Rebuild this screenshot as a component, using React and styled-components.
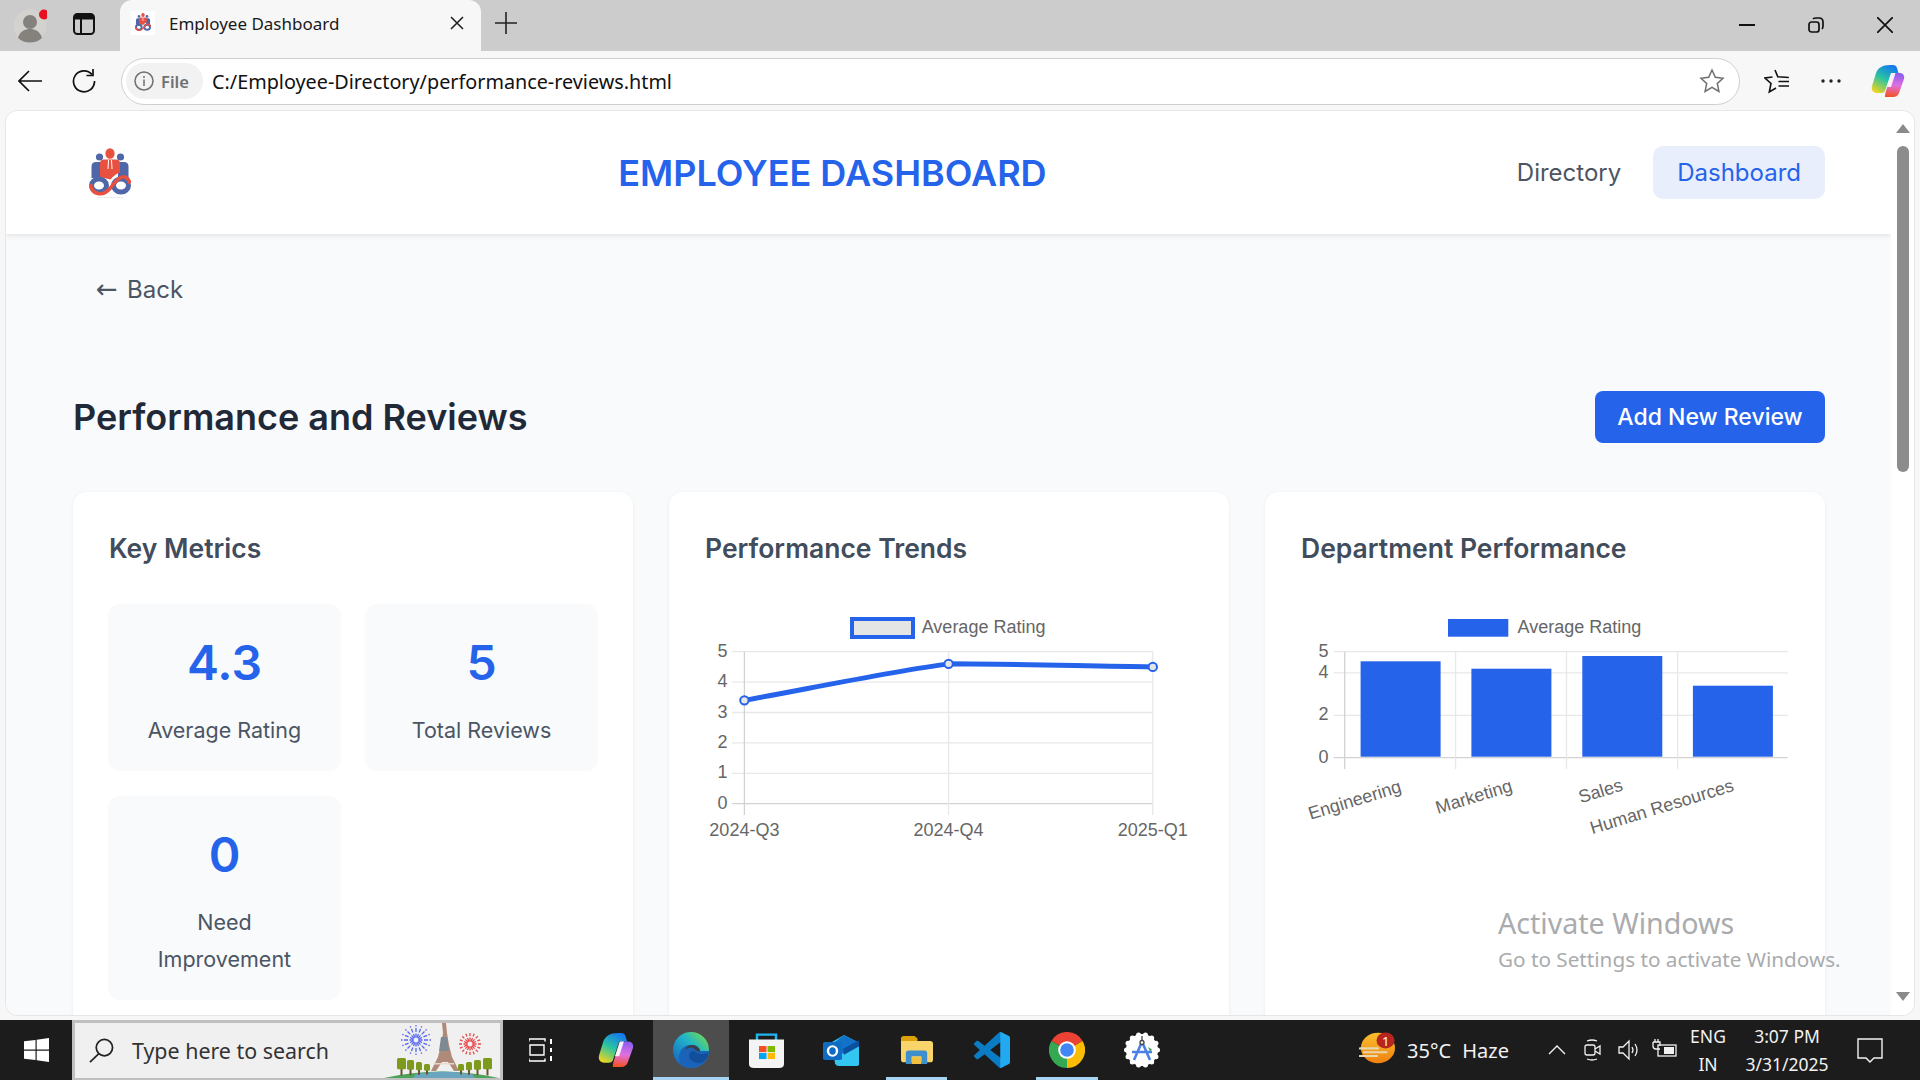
import React from 'react';
import styled, { createGlobalStyle } from 'styled-components';

const GlobalStyle = createGlobalStyle`
    html, body {
        margin: 0;
        padding: 0;
        width: 1920px;
        height: 1080px;
        overflow: hidden;
        background: #f7f7f7;
    }
    * { box-sizing: border-box; }
`;

const BLUE = '#2563eb';
const UI_FONT = `'Noto Sans', 'Open Sans', sans-serif`;
const PAGE_FONT = `Inter, 'Liberation Sans', sans-serif`;

/* ---------- browser frame ---------- */

const Screen = styled.div`
    position: relative;
    display: flex;
    flex-direction: column;
    width: 1920px;
    height: 1080px;
    overflow: hidden;
    font-family: ${UI_FONT};
`;

const TabStrip = styled.div`
    display: flex;
    align-items: stretch;
    height: 51px;
    flex: none;
    padding-left: 6px;
    background: #cccccc;
`;

const StripButton = styled.div`
    display: flex;
    align-items: center;
    justify-content: center;
    flex: none;
    width: ${p => p.$w || 48}px;
    margin-left: ${p => p.$ml || 0}px;
    padding-bottom: ${p => p.$pb || 0}px;
    position: relative;
`;

const Tab = styled.div`
    display: flex;
    align-items: center;
    flex: none;
    width: 361px;
    margin-left: 12px;
    padding: 0 17px 5px 11px;
    background: #f7f7f7;
    border-radius: 12px 12px 0 0;
`;

const TabIcon = styled.div`
    display: flex;
    align-items: center;
    justify-content: center;
    width: 24px;
    height: 24px;
    background: #fff;
`;

const TabTitle = styled.span`
    flex: 1;
    margin-left: 14px;
    font-size: 17px;
    color: #1a1a1a;
`;

const WindowControls = styled.div`
    display: flex;
    margin-left: auto;
`;

const WindowButton = styled.div`
    display: flex;
    align-items: center;
    justify-content: center;
    width: 69.4px;
    padding-bottom: 2px;
`;

const Toolbar = styled.div`
    display: flex;
    align-items: center;
    height: 60px;
    flex: none;
    padding-left: 6px;
    background: #f7f7f7;
`;

const AddressBar = styled.div`
    display: flex;
    align-items: center;
    flex: none;
    width: 1619px;
    height: 47px;
    margin-left: 13px;
    padding: 0 14px 0 4px;
    background: #fff;
    border: 1.5px solid #cfcfcf;
    border-radius: 24px;
`;

const FileChip = styled.div`
    display: flex;
    align-items: center;
    gap: 7px;
    height: 36px;
    width: 77px;
    padding-left: 8px;
    border-radius: 18px;
    background: #f2f2f2;
    font-size: 16.5px;
    font-weight: 600;
    color: #707070;
`;

const UrlText = styled.span`
    flex: 1;
    margin-left: 9px;
    font-size: 19.8px;
    color: #111;
`;

const ToolButton = styled.div`
    display: flex;
    align-items: center;
    justify-content: center;
    flex: none;
    width: ${p => p.$w}px;
    margin-left: ${p => p.$ml || 0}px;
`;

/* ---------- page ---------- */

const Viewport = styled.div`
    flex: 1;
    min-height: 0;
    padding: 0 6px 5px 6px;
    background: #f7f7f7;
`;

const PageFrame = styled.div`
    display: flex;
    height: 100%;
    overflow: hidden;
    background: #fff;
    border-radius: 12px;
    box-shadow: 0 0 0 1px #e6e6e6;
`;

const Page = styled.main`
    flex: 1;
    min-width: 0;
    overflow: hidden;
    background: #f9fafb;
    font-family: ${PAGE_FONT};
`;

const Scrollbar = styled.div`
    display: flex;
    flex-direction: column;
    align-items: center;
    flex: none;
    width: 23px;
    padding: 13px 0 14px;
    background: #fff;
`;

const ScrollArrow = styled.div`
    width: 0;
    height: 0;
    border-left: 7.5px solid transparent;
    border-right: 7.5px solid transparent;
    ${p => (p.$down ? 'border-top' : 'border-bottom')}: 9px solid #8a8a8a;
    ${p => (p.$down ? 'margin-top: auto;' : '')}
`;

const ScrollThumb = styled.div`
    width: 12px;
    height: 326px;
    margin-top: 13px;
    border-radius: 6px;
    background: #8c8c8c;
`;

const Header = styled.header`
    display: flex;
    align-items: center;
    justify-content: space-between;
    height: 123px;
    padding: 0 66px 0 67px;
    background: #fff;
    box-shadow: 0 2px 5px rgba(0, 0, 0, 0.09);
`;

const LogoBox = styled.div`
    display: flex;
    width: 99px;
    padding-left: 16px;
`;

const BrandTitle = styled.h1`
    margin: 0;
    font-size: 36px;
    font-weight: 600;
    color: ${BLUE};
`;

const Nav = styled.nav`
    display: flex;
    gap: 8px;
`;

const NavLink = styled.a`
    display: flex;
    align-items: center;
    height: 53px;
    padding: 0 24px;
    border-radius: 10px;
    font-size: 24px;
    color: ${p => (p.$active ? BLUE : '#4b5563')};
    background: ${p => (p.$active ? '#e8eefc' : 'transparent')};
`;

const Main = styled.div`
    padding: 39px 66px 0 67px;
`;

const BackLink = styled.a`
    display: flex;
    align-items: center;
    height: 32px;
    margin-left: 23px;
    font-size: 24px;
    color: #4b5563;
`;

const BackArrow = styled.span`
    width: 31px;
    font-family: 'DejaVu Sans', sans-serif;
    font-size: 26px;
    line-height: 32px;
`;

const TitleRow = styled.div`
    display: flex;
    align-items: center;
    justify-content: space-between;
    margin: 86px 0 49px;
`;

const PageTitle = styled.h2`
    margin: 0;
    font-size: 36px;
    font-weight: 600;
    color: #1f2937;
`;

const PrimaryButton = styled.button`
    height: 52px;
    width: 230px;
    border: 0;
    border-radius: 8px;
    background: ${BLUE};
    color: #fff;
    font-family: ${PAGE_FONT};
    font-size: 23px;
    font-weight: 500;
`;

const CardGrid = styled.div`
    display: grid;
    grid-template-columns: repeat(3, 1fr);
    gap: 36px;
`;

const Card = styled.section`
    padding: 35px;
    background: #fff;
    border-radius: 14px;
    box-shadow: 0 1px 4px rgba(0, 0, 0, 0.06);
`;

const CardTitle = styled.h3`
    margin: 0 0 36px;
    height: 41px;
    padding: 1px 0 0 1px;
    line-height: 40px;
    font-size: 26.5px;
    font-weight: 600;
    color: #414c5c;
`;

const MetricGrid = styled.div`
    display: grid;
    grid-template-columns: repeat(2, 1fr);
    gap: 25px 24px;
`;

const Metric = styled.div`
    padding: 29px 24px 22px;
    text-align: center;
    background: #f8fafc;
    border-radius: 12px;
`;

const MetricValue = styled.div`
    height: 60px;
    line-height: 60px;
    font-size: 48px;
    font-weight: 600;
    color: ${BLUE};
`;

const MetricLabel = styled.div`
    margin-top: 19px;
    line-height: 37px;
    font-size: 21.5px;
    color: #4b5563;
`;

const ChartSvg = styled.svg`
    display: block;
    width: 490px;
    height: 245px;
`;

const ChartText = styled.text`
    font-family: 'Liberation Sans', Arial, sans-serif;
    font-size: 18px;
    fill: #666;
    dominant-baseline: central;
`;

const Watermark = styled.div`
    position: absolute;
    left: 1498px;
    top: 904px;
    color: #a9abad;
    pointer-events: none;
`;

const WatermarkTitle = styled.div`
    font-size: 28.6px;
    line-height: 38px;
`;

const WatermarkHint = styled.div`
    font-size: 20.7px;
    line-height: 34px;
`;

/* ---------- taskbar ---------- */

const Taskbar = styled.footer`
    display: flex;
    align-items: stretch;
    flex: none;
    height: 60px;
    background: #1c1c1c;
    color: #f2f2f2;
`;

const StartButton = styled.div`
    display: flex;
    align-items: center;
    justify-content: center;
    width: 72px;
    flex: none;
`;

const SearchBox = styled.div`
    display: flex;
    align-items: center;
    flex: none;
    width: 431px;
    padding-left: 14px;
    background: #f0f0f0;
    border: 3px solid #c0c0c0;
    border-bottom-width: 2px;
    overflow: hidden;
`;

const SearchText = styled.span`
    margin-left: 18px;
    font-size: 21.4px;
    color: #333;
`;

const SearchArt = styled.svg`
    display: block;
    flex: none;
    margin-left: auto;
    margin-right: -1px;
`;

const AppButton = styled.div`
    position: relative;
    display: flex;
    align-items: center;
    justify-content: center;
    flex: none;
    width: 75.2px;
    background: ${p => (p.$active ? '#4d4d4d' : 'transparent')};
`;

const OpenMark = styled.span`
    position: absolute;
    bottom: 0;
    left: ${p => (p.$wide ? '0' : '7px')};
    right: ${p => (p.$wide ? '0' : '7px')};
    height: 3px;
    background: #a6d3f2;
`;

const Tray = styled.div`
    display: flex;
    align-items: center;
    margin-left: auto;
    padding-right: 32px;
`;

const WeatherText = styled.span`
    margin-left: 12px;
    margin-right: 30px;
    font-size: 20px;
    word-spacing: 6px;
`;

const TrayIcon = styled.div`
    display: flex;
    align-items: center;
    justify-content: center;
    width: 36px;
`;

const TwoLines = styled.div`
    display: flex;
    flex-direction: column;
    align-items: center;
    width: ${p => p.$w}px;
    margin-left: ${p => p.$ml || 0}px;
    font-size: 17.5px;
    line-height: 28px;
`;

const NotifyIcon = styled.div`
    display: flex;
    justify-content: center;
    width: 36px;
    margin-left: 19px;
`;

/* ---------- drawings ---------- */

const BrandLogo = ({ size = 42 }) => (
    <svg width={size} height={size * 50 / 42} viewBox="0 0 42 50">
        <circle cx="10.5" cy="9" r="3.6" fill="#4f67a8" />
        <circle cx="31.5" cy="9" r="3.6" fill="#4f67a8" />
        <path d="M2.5 30V18.500q0-4.500 4.500-4.500h6v16zM39.5 30V18.500q0-4.500-4.500-4.500h-6v16z" fill="#4f67a8" />
        <ellipse cx="21" cy="5.5" rx="4.6" ry="5.3" fill="#e8503f" />
        <path d="M11 29V15.500q0-4 4-4h12q4 0 4 4v9q-5 1.500-9.500 7z" fill="#e8503f" />
        <path d="M19.500 12l-.5 9M22.500 12l.5 9" stroke="#fff" strokeWidth="1" fill="none" />
        <ellipse cx="10" cy="37.500" rx="7.500" ry="6.500" fill="none" stroke="#4f67a8" strokeWidth="5" />
        <ellipse cx="32" cy="37.500" rx="7.500" ry="6.500" fill="none" stroke="#4f67a8" strokeWidth="5" />
        <path d="M1.500 36c1 11 12 13 19.500 4.500C27 32 33 27 37 29.500c2.500 1.500 3.500 3.500 4 6" fill="none" stroke="#e8503f" strokeWidth="3.500" />
        <path d="M8 49.500h26" stroke="#ececec" strokeWidth="1" />
    </svg>
);

const Avatar = () => (
    <svg width="34" height="34" viewBox="0 0 34 34">
        <circle cx="17" cy="17" r="16.500" fill="#d4d2cf" />
        <circle cx="17" cy="13" r="7" fill="#85827e" />
        <path d="M5 29c2-7 7-9 12-9s10 2 12 9q-5 4.500-12 4.500T5 29z" fill="#85827e" />
        <circle cx="31" cy="5.500" r="5" fill="#e81123" />
    </svg>
);

const SidebarIcon = () => (
    <svg width="22" height="22" viewBox="0 0 22 22" fill="none" stroke="#111" strokeWidth="2">
        <rect x="1" y="1" width="20" height="20" rx="3.500" />
        <path d="M1 5.500h20M8 5.500V21" />
        <path d="M2 2h18v3H2z" fill="#111" stroke="none" />
    </svg>
);

const Glyph = ({ size = 20, color = '#111', width = 1.6, children, box = 20 }) => (
    <svg width={size} height={size} viewBox={`0 0 ${box} ${box}`} fill="none" stroke={color} strokeWidth={width}>
        {children}
    </svg>
);

const CopilotIcon = ({ id, size = 34 }) => (
    <svg width={size} height={size} viewBox="0 0 34 34">
        <defs>
            <linearGradient id={`${id}A`} x1="0.7" y1="0" x2="0.2" y2="1">
                <stop offset="0" stopColor="#1479f0" />
                <stop offset="0.5" stopColor="#2bc4a0" />
                <stop offset="1" stopColor="#f0d520" />
            </linearGradient>
            <linearGradient id={`${id}B`} x1="0.5" y1="0" x2="0.4" y2="1">
                <stop offset="0" stopColor="#8a5cf0" />
                <stop offset="0.5" stopColor="#e070e0" />
                <stop offset="1" stopColor="#f5521f" />
            </linearGradient>
        </defs>
        <path d="M19 1h3c2 0 3.500 1 4 3l1.500 5H20L14 27c-1 1.500-2 2-4 2H6c-4 0-6-3-5-7l4-13C7 4 11 1 19 1z" fill={`url(#${id}A)`} />
        <path d="M14 33h-1 9c3 0 5-1.500 6-4l5-14c1-3-1-6-4-6h-8L15 27c-1 3-1 6-1 6z" fill={`url(#${id}B)`} />
        <path d="M20.500 9h4l-4.500 14h-4z" fill="#fff" fillOpacity="0.9" />
    </svg>
);

const WindowsLogo = () => (
    <svg width="25" height="24" viewBox="0 0 25 25" preserveAspectRatio="none" fill="#fff">
        <path d="M0 3.500L11.500 2v10H0zM12.700 1.800L25 0v12H12.700zM0 13.200h11.500V23L0 21.500zM12.700 13.200H25V25l-12.300-1.800z" />
    </svg>
);

const TaskViewIcon = () => (
    <svg width="24" height="24" viewBox="0 0 24 24" fill="none" stroke="#fff" strokeWidth="1.400">
        <path d="M0 1h16v2.500M0 3.500V1M1 7h14v10H1zM0 23h16v-2.500M0 20.500V23" />
        <path d="M22 1v5M22 10v4M22 18v5" strokeWidth="2" />
    </svg>
);

const EdgeIcon = () => (
    <svg width="36" height="36" viewBox="0 0 36 36">
        <defs>
            <linearGradient id="edgeA" x1="0.85" y1="0.1" x2="0.1" y2="0.9">
                <stop offset="0" stopColor="#67d65e" />
                <stop offset="0.35" stopColor="#22b6c8" />
                <stop offset="1" stopColor="#1468c4" />
            </linearGradient>
        </defs>
        <circle cx="18" cy="18" r="18" fill="url(#edgeA)" />
        <path d="M9 34C3 27 6 13 18 13c5 0 9 3 9 6h9c0 9-7 17-18 17-3 0-6-1-9-2z" fill="#1a63b8" />
        <path d="M36 19c0 2-4 3-7 3-5 0-6-2-8-3-3 0-5 2-5 5 0 4 5 7 10 7 5 0 9-4 10-12z" fill="#114f9c" />
        <path d="M27 19.500c0-4-4-6.500-8-6.500-3 0-6 2-6.500 5 2-2 5-3 7.500-2 2 .8 3 4 7 3.500z" fill="#3a3f47" />
    </svg>
);

const StoreIcon = () => (
    <svg width="35" height="35" viewBox="0 0 35 43" preserveAspectRatio="none">
        <path d="M8 9V2h19v7" fill="none" stroke="#1fb6f0" strokeWidth="2.500" />
        <path d="M0 8h35v30q0 5-5 5H5q-5 0-5-5z" fill="#f4f4f4" />
        <rect x="10" y="16" width="7.500" height="7.500" fill="#f25022" />
        <rect x="18.500" y="16" width="7.500" height="7.500" fill="#7fba00" />
        <rect x="10" y="24.500" width="7.500" height="7.500" fill="#00a4ef" />
        <rect x="18.500" y="24.500" width="7.500" height="7.500" fill="#ffb900" />
    </svg>
);

const OutlookIcon = () => (
    <svg width="36" height="31" viewBox="0 0 36 36" preserveAspectRatio="none">
        <path d="M9 8l12-8 15 9v25q0 2-2 2H16q-3 0-4-3z" fill="#33c6f0" />
        <path d="M12 8l9-8 15 9v4L21 22l-9-5z" fill="#1272c8" />
        <path d="M20 16l16-10v7L21 23z" fill="#0b4f9e" />
        <rect x="0" y="8" width="19" height="21" rx="2" fill="#0f6cc4" />
        <ellipse cx="9.500" cy="18.500" rx="4.500" ry="5.500" fill="none" stroke="#fff" strokeWidth="2.400" />
    </svg>
);

const ExplorerIcon = () => (
    <svg width="32" height="28" viewBox="0 0 33 33" preserveAspectRatio="none">
        <path d="M0 3q0-3 3-3h11l3 3v5H0z" fill="#dca20a" />
        <path d="M0 6h30q3 0 3 3v19q0 3-3 3H3q-3 0-3-3z" fill="#f8d46a" />
        <path d="M5 33V20q0-3 3-3h16q3 0 3 3v13h-6v-9H11v9z" fill="#3f8fcf" />
        <rect x="11" y="25" width="10" height="8" fill="#f0c040" />
    </svg>
);

const VsCodeIcon = () => (
    <svg width="36" height="36" viewBox="0 0 24 24">
        <defs>
            <clipPath id="vsRight"><rect x="17.500" y="0" width="7" height="24" /></clipPath>
        </defs>
        <path d="M23.150 2.587L18.210.21a1.494 1.494 0 0 0-1.705.29l-9.460 8.630-4.120-3.128a.999.999 0 0 0-1.276.057L.327 7.261A1 1 0 0 0 .326 8.740L3.899 12 .326 15.260a1 1 0 0 0 .001 1.479L1.650 17.940a.999.999 0 0 0 1.276.057l4.120-3.128 9.460 8.630a1.492 1.492 0 0 0 1.704.29l4.942-2.377A1.500 1.500 0 0 0 24 20.060V3.939a1.500 1.500 0 0 0-.850-1.352zm-5.146 14.861L10.826 12l7.178-5.448v10.896z" fill="#0a7cc4" />
        <path d="M23.150 2.587L18.210.21a1.494 1.494 0 0 0-1.705.29V23.500a1.492 1.492 0 0 0 1.704.29l4.942-2.377A1.500 1.500 0 0 0 24 20.060V3.939a1.500 1.500 0 0 0-.850-1.352z" fill="#23a9f1" clipPath="url(#vsRight)" />
    </svg>
);

const ChromeIcon = () => (
    <svg width="36" height="36" viewBox="0 0 36 36">
        <path d="M18 18L2.400 9A18 18 0 0 1 33.600 9Z" fill="#ea4335" />
        <path d="M18 18L33.600 9A18 18 0 0 1 18 36Z" fill="#fbbc04" />
        <path d="M18 18L18 36A18 18 0 0 1 2.400 9Z" fill="#34a853" />
        <circle cx="18" cy="18" r="8.800" fill="#fff" />
        <circle cx="18" cy="18" r="6.800" fill="#4285f4" />
    </svg>
);

const StudioIcon = () => {
    const bumps = Array.from({ length: 14 }, (_, i) => {
        const a = (i / 14) * Math.PI * 2;
        return { x: 18 + Math.cos(a) * 15.5, y: 18 + Math.sin(a) * 15.5 };
    });
    return (
        <svg width="36" height="36" viewBox="0 0 36 36">
            <circle cx="18" cy="18" r="16" fill="#fff" />
            {bumps.map((b, i) => <circle key={i} cx={b.x} cy={b.y} r="2.500" fill="#fff" />)}
            <path d="M17 12L10 28M19 12l7 16M8 20h20" stroke="#4a80e8" strokeWidth="2.600" fill="none" />
            <path d="M18 4v5" stroke="#444" strokeWidth="1.300" />
            <circle cx="18" cy="10.500" r="2" fill="none" stroke="#444" strokeWidth="1.300" />
            <path d="M24 15l4 2.500-2 2z" fill="#3ba55c" />
        </svg>
    );
};

const Fireworks = ({ cx, cy, r, color, rays = 16 }) => (
    <g>
        {Array.from({ length: rays }, (_, i) => {
            const a = (i / rays) * Math.PI * 2;
            return (
                <line
                    key={i}
                    x1={cx + Math.cos(a) * 2.5}
                    y1={cy + Math.sin(a) * 2.5}
                    x2={cx + Math.cos(a) * r}
                    y2={cy + Math.sin(a) * r}
                    stroke={color}
                    strokeWidth="1.300"
                    strokeDasharray="4 1.500"
                />
            );
        })}
    </g>
);

const EiffelArt = () => (
    <SearchArt width="118" height="55" viewBox="0 0 118 55">
        <Fireworks cx={33} cy={17} r={15} color="#5566ee" />
        <Fireworks cx={87} cy={21} r={11} color="#e8474a" />
        <path d="M1 55Q58 42 116 55z" fill="#4da35a" />
        <g transform="translate(3 0)">
            <path d="M30 51Q58 46 86 51l3 4H27z" fill="#6aa5c0" />
            <path d="M56 0h4l1 10 2 12 3 12 7 14h-5l-6-9h-6l-6 9h-5l7-14 3-12 2-12z" fill="#b08a78" />
            <path d="M55 14h6l2 14H53z" fill="#7d8a92" />
            <path d="M48 40h20v1.500H48z" fill="#e8d8c8" />
            {[[11, 9, 15], [21, 7, 13], [30, 6, 11], [38, 6, 9], [72, 6, 9], [80, 6, 11], [88, 7, 13], [97, 9, 15]].map(([x, w, h]) => (
                <g key={x}>
                    <rect x={x + w / 2 - 1} y={50 - h / 3} width="2" height={h / 2} fill="#6b5232" />
                    <rect x={x} y={50 - h} width={w} height={h * 0.75} rx="1.500" fill="#7d9a1c" />
                </g>
            ))}
        </g>
    </SearchArt>
);

const WeatherIcon = () => (
    <svg width="36" height="32" viewBox="0 0 38 38" preserveAspectRatio="none">
        <defs>
            <linearGradient id="sun" x1="0" y1="0" x2="0" y2="1">
                <stop offset="0" stopColor="#fbc02d" />
                <stop offset="1" stopColor="#f08010" />
            </linearGradient>
        </defs>
        <circle cx="20" cy="19" r="18" fill="url(#sun)" />
        <path d="M1 19.500h19M5 24h24M1 28.500h18" stroke="#e5d7ae" strokeWidth="2.500" strokeLinecap="round" />
        <circle cx="28" cy="10" r="9.500" fill="#b7251c" />
    </svg>
);

const BadgeDigit = styled.span`
    position: absolute;
    left: 23px;
    top: -4px;
    width: 9px;
    font-size: 13px;
    line-height: 26px;
    color: #fff;
`;

const WeatherWrap = styled.div`
    position: relative;
    display: flex;
    flex: none;
    margin-bottom: 4px;
`;

/* ---------- charts ---------- */

const GRID = '#e8e8e8';
const AXIS = '#d2d2d2';

const TrendChart = () => {
    const yAt = v => 199.7 - v * 30.4;
    const xs = [40.4, 244.6, 448.8];
    const quarters = ['2024-Q3', '2024-Q4', '2025-Q1'];
    const points = [3.4, 4.6, 4.5].map((v, i) => ({ x: xs[i], y: yAt(v) }));
    const line = `M${points[0].x} ${points[0].y} C108 84 190 67 ${points[1].x} ${points[1].y} C310 60 380 62 ${points[2].x} ${points[2].y}`;

    return (
        <ChartSvg viewBox="0 0 490 245">
            <rect x="148" y="15" width="61" height="18" fill="#e5e5e5" stroke={BLUE} strokeWidth="4" />
            <ChartText x="217.700" y="22.700">Average Rating</ChartText>
            {[0, 1, 2, 3, 4, 5].map(v => (
                <g key={v}>
                    <line x1="28.300" x2="448.800" y1={yAt(v)} y2={yAt(v)} stroke={v === 0 ? AXIS : GRID} strokeWidth="1.300" />
                    <ChartText x="23.500" y={yAt(v) - 1} textAnchor="end">{v}</ChartText>
                </g>
            ))}
            {xs.map((x, i) => (
                <g key={x}>
                    <line x1={x} x2={x} y1="47.700" y2="211" stroke={i === 0 ? AXIS : GRID} strokeWidth="1.300" />
                    <ChartText x={x} y="225.500" textAnchor="middle">{quarters[i]}</ChartText>
                </g>
            ))}
            <path d={line} fill="none" stroke={BLUE} strokeWidth="5" />
            {points.map(p => (
                <circle key={p.x} cx={p.x} cy={p.y} r="4.200" fill="#e5e5e5" stroke={BLUE} strokeWidth="2" />
            ))}
        </ChartSvg>
    );
};

const DepartmentChart = () => {
    const yAt = v => 153.7 - v * 21.2;
    const verticals = [44.7, 155.6, 266.5, 377.7];
    const bars = [
        { x: 60.6, top: 57.3 },
        { x: 171.4, top: 64.7 },
        { x: 282.3, top: 52 },
        { x: 392.9, top: 81.7 },
    ];
    const labels = [
        { text: 'Engineering', x: 54.7, y: 196 },
        { text: 'Marketing', x: 173.9, y: 192.7 },
        { text: 'Sales', x: 300.6, y: 187 },
        { text: 'Human Resources', x: 361.9, y: 202.7 },
    ];

    return (
        <ChartSvg viewBox="0 0 490 245">
            <rect x="148" y="15" width="60.300" height="17.700" fill={BLUE} />
            <ChartText x="217.600" y="22.700">Average Rating</ChartText>
            {[0, 2, 4, 5].map(v => (
                <g key={v}>
                    <line x1="33.700" x2="487.600" y1={yAt(v)} y2={yAt(v)} stroke={v === 0 ? AXIS : GRID} strokeWidth="1.300" />
                    <ChartText x="28.500" y={yAt(v) - 1} textAnchor="end">{v}</ChartText>
                </g>
            ))}
            {verticals.map((x, i) => (
                <line key={x} x1={x} x2={x} y1="47.700" y2="165" stroke={i === 0 ? AXIS : GRID} strokeWidth="1.300" />
            ))}
            {bars.map(b => (
                <rect key={b.x} x={b.x} y={b.top} width="80" height={152.7 - b.top} fill={BLUE} />
            ))}
            {labels.map(l => (
                <ChartText key={l.text} x={l.x} y={l.y} textAnchor="middle" transform={`rotate(-17 ${l.x} ${l.y})`}>
                    {l.text}
                </ChartText>
            ))}
        </ChartSvg>
    );
};

const metrics = [
    { value: '4.3', label: 'Average Rating' },
    { value: '5', label: 'Total Reviews' },
    { value: '0', label: 'Need Improvement' },
];

const App = () => {
    return (
        <Screen>
            <GlobalStyle />
            <TabStrip>
                <StripButton><Avatar /></StripButton>
                <StripButton $ml={6} $pb={3}><SidebarIcon /></StripButton>
                <Tab>
                    <TabIcon><BrandLogo size={16} /></TabIcon>
                    <TabTitle>Employee Dashboard</TabTitle>
                    <Glyph size={14} box={14} color="#222"><path d="M1 1l12 12M13 1L1 13" /></Glyph>
                </Tab>
                <StripButton $w={50} $pb={5}>
                    <Glyph size={22} box={22} color="#222"><path d="M11 0v22M0 11h22" /></Glyph>
                </StripButton>
                <WindowControls>
                    <WindowButton><Glyph size={16} box={16} width={2}><path d="M0 8h16" /></Glyph></WindowButton>
                    <WindowButton>
                        <Glyph size={16} box={16} width={1.700}>
                            <rect x="1" y="5" width="10" height="10" rx="2.500" />
                            <path d="M5 2q1-1 3-1h3q4 0 4 4v4q0 2-1 3" />
                        </Glyph>
                    </WindowButton>
                    <WindowButton><Glyph size={16} box={16} width={1.700}><path d="M0 0l16 16M16 0L0 16" /></Glyph></WindowButton>
                </WindowControls>
            </TabStrip>

            <Toolbar>
                <ToolButton $w={48}>
                    <Glyph size={24} box={24} width={1.700}><path d="M24 12H1M11 2L1 12l10 10" /></Glyph>
                </ToolButton>
                <ToolButton $w={48} $ml={6}>
                    <Glyph size={24} box={24} width={1.700}>
                        <path d="M20 5.500A10.500 10.500 0 1 0 22.500 12" />
                        <path d="M21 0v6.500h-6.500" />
                    </Glyph>
                </ToolButton>
                <AddressBar>
                    <FileChip>
                        <Glyph size={20} box={20} color="#707070" width={1.500}>
                            <circle cx="10" cy="10" r="9" />
                            <path d="M10 8.500V15M10 5v2" />
                        </Glyph>
                        File
                    </FileChip>
                    <UrlText>C:/Employee-Directory/performance-reviews.html</UrlText>
                    <Glyph size={26} box={26} color="#6e6e6e" width={1.500}>
                        <path d="M13 2l3.300 7.300 7.700.9-5.700 5.300 1.600 7.900L13 19.400l-6.900 4 1.600-7.900L2 10.200l7.700-.9z" />
                    </Glyph>
                </AddressBar>
                <ToolButton $w={52} $ml={11}>
                    <Glyph size={26} box={26} width={1.600}>
                        <path d="M11 2l2.800 6.800 11 .7M14.500 13.500H25M14.500 18H25M8.500 9L1 10l6 5.500L5.300 24l6.700-4" />
                    </Glyph>
                </ToolButton>
                <ToolButton $w={56}>
                    <svg width="20" height="4" viewBox="0 0 20 4" fill="#222">
                        <circle cx="2" cy="2" r="1.700" /><circle cx="10" cy="2" r="1.700" /><circle cx="18" cy="2" r="1.700" />
                    </svg>
                </ToolButton>
                <ToolButton $w={58}><CopilotIcon id="copTop" /></ToolButton>
            </Toolbar>

            <Viewport>
                <PageFrame>
                    <Page>
                        <Header>
                            <LogoBox><BrandLogo /></LogoBox>
                            <BrandTitle>EMPLOYEE DASHBOARD</BrandTitle>
                            <Nav>
                                <NavLink>Directory</NavLink>
                                <NavLink $active>Dashboard</NavLink>
                            </Nav>
                        </Header>
                        <Main>
                            <BackLink><BackArrow>←</BackArrow>Back</BackLink>
                            <TitleRow>
                                <PageTitle>Performance and Reviews</PageTitle>
                                <PrimaryButton>Add New Review</PrimaryButton>
                            </TitleRow>
                            <CardGrid>
                                <Card>
                                    <CardTitle>Key Metrics</CardTitle>
                                    <MetricGrid>
                                        {metrics.map(m => (
                                            <Metric key={m.label}>
                                                <MetricValue>{m.value}</MetricValue>
                                                <MetricLabel>{m.label}</MetricLabel>
                                            </Metric>
                                        ))}
                                    </MetricGrid>
                                </Card>
                                <Card>
                                    <CardTitle>Performance Trends</CardTitle>
                                    <TrendChart />
                                </Card>
                                <Card>
                                    <CardTitle>Department Performance</CardTitle>
                                    <DepartmentChart />
                                </Card>
                            </CardGrid>
                        </Main>
                    </Page>
                    <Scrollbar>
                        <ScrollArrow />
                        <ScrollThumb />
                        <ScrollArrow $down />
                    </Scrollbar>
                </PageFrame>
            </Viewport>

            <Taskbar>
                <StartButton><WindowsLogo /></StartButton>
                <SearchBox>
                    <Glyph size={25} box={26} width={1.800} color="#222">
                        <circle cx="16" cy="10" r="8.500" />
                        <path d="M10 16.500L1 25" />
                    </Glyph>
                    <SearchText>Type here to search</SearchText>
                    <EiffelArt />
                </SearchBox>
                <AppButton><TaskViewIcon /></AppButton>
                <AppButton><CopilotIcon id="copBar" size={36} /></AppButton>
                <AppButton $active><EdgeIcon /><OpenMark $wide /></AppButton>
                <AppButton><StoreIcon /></AppButton>
                <AppButton><OutlookIcon /></AppButton>
                <AppButton><ExplorerIcon /><OpenMark /></AppButton>
                <AppButton><VsCodeIcon /></AppButton>
                <AppButton><ChromeIcon /><OpenMark /></AppButton>
                <AppButton><StudioIcon /></AppButton>
                <Tray>
                    <WeatherWrap>
                        <WeatherIcon />
                        <BadgeDigit>1</BadgeDigit>
                    </WeatherWrap>
                    <WeatherText>35°C Haze</WeatherText>
                    <TrayIcon>
                        <Glyph size={18} box={18} color="#f2f2f2" width={1.400}><path d="M1 13l8-8 8 8" /></Glyph>
                    </TrayIcon>
                    <TrayIcon>
                        <Glyph size={22} box={22} color="#f2f2f2" width={1.300}>
                            <rect x="3" y="6" width="10" height="10" rx="2" />
                            <path d="M13 10l5-3v8l-5-3M5 2q5-2 10 0M5 20q5 2 10 0" />
                        </Glyph>
                    </TrayIcon>
                    <TrayIcon>
                        <Glyph size={24} box={24} color="#f2f2f2" width={1.300}>
                            <path d="M2 9v6h4l6 6V3L6 9zM15 9q2 3 0 6M18 6q4 6 0 12" />
                        </Glyph>
                    </TrayIcon>
                    <TrayIcon>
                        <Glyph size={26} box={26} color="#f2f2f2" width={1.300}>
                            <rect x="6" y="8" width="18" height="11" />
                            <rect x="12" y="10" width="10" height="7" fill="#f2f2f2" stroke="none" />
                            <path d="M1 5v4q0 3 3 3h4M3 2v3M6 2v3M1 5h7v4" />
                        </Glyph>
                    </TrayIcon>
                    <TwoLines $w={40} $ml={5}><span>ENG</span><span>IN</span></TwoLines>
                    <TwoLines $w={92} $ml={13}><span>3:07 PM</span><span>3/31/2025</span></TwoLines>
                    <NotifyIcon>
                        <Glyph size={26} box={26} color="#f2f2f2" width={1.400}>
                            <path d="M1 2h24v19h-8l-4 4-4-4H1z" />
                        </Glyph>
                    </NotifyIcon>
                </Tray>
            </Taskbar>

            <Watermark>
                <WatermarkTitle>Activate Windows</WatermarkTitle>
                <WatermarkHint>Go to Settings to activate Windows.</WatermarkHint>
            </Watermark>
        </Screen>
    );
};

export default App;
